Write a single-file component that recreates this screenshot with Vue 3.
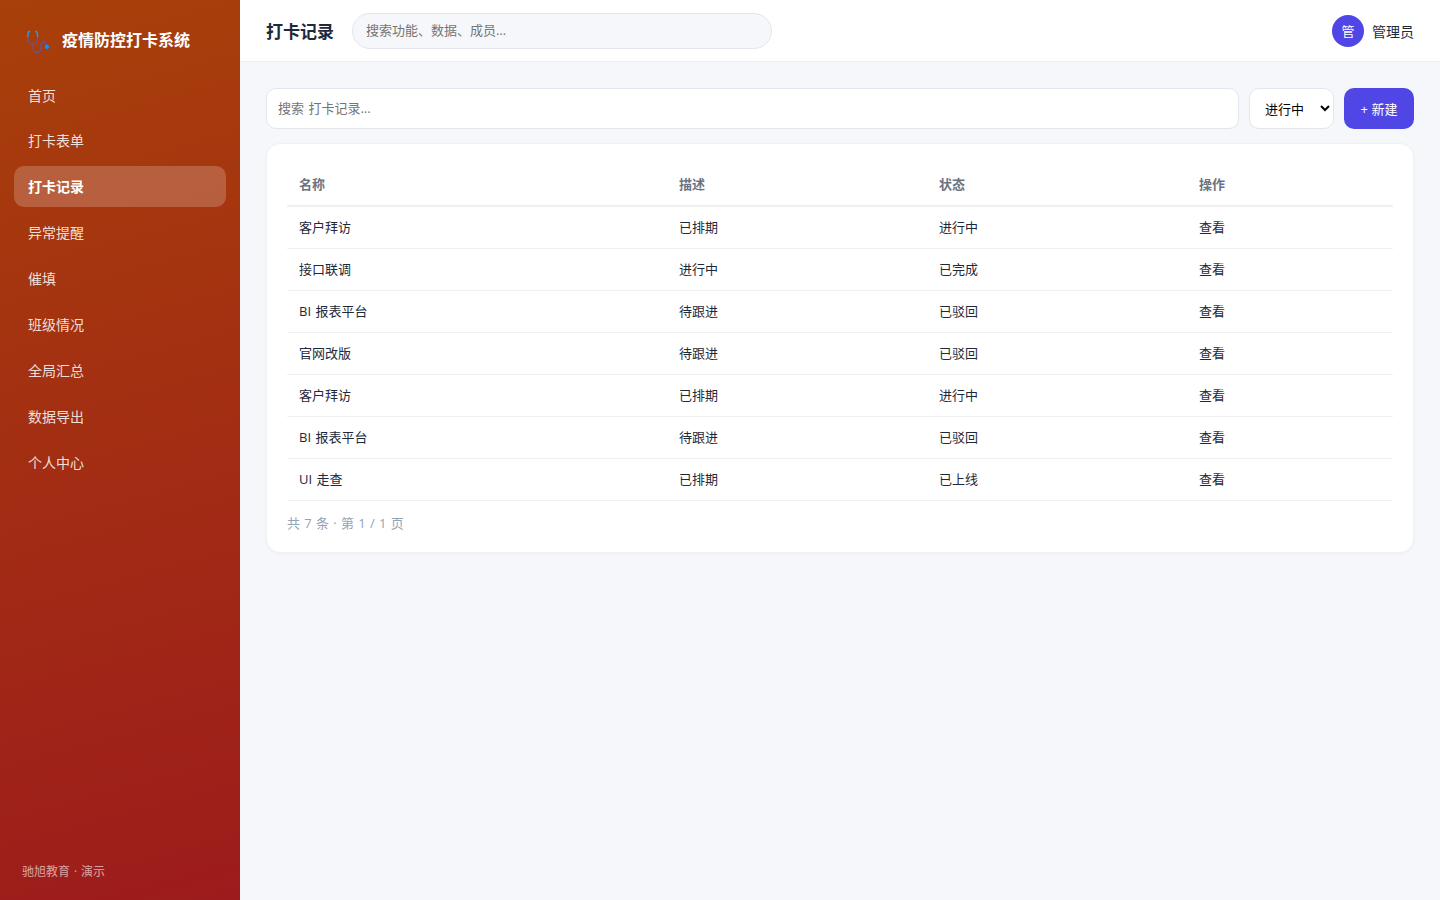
<template>
  <div class="layout">
    <aside class="sidebar">
      <div class="brand">
        <svg class="brand-icon" viewBox="0 0 24 24" fill="none" stroke-width="1.4">
          <path d="M2.8 7.5v2.6c0 2.6 2 4.4 4.6 4.4s4.6-1.8 4.6-4.4V7.5" stroke="#6b5496" />
          <path d="M5 2.4H3.6C2.7 3.6 2.5 5.4 2.7 7.7M9.8 2.4h1.4c.9 1.2 1.1 3 .9 5.3" stroke="#12a5ee" />
          <path d="M7.8 14.5v3.7c0 2.8 1.5 4.2 3.7 4.2s3.8-1.4 3.8-4.2v-3.4c0-1.5.9-2.5 2.5-2.5s2.6 1.1 2.6 2.8v.8" stroke="#6b5496" stroke-width="1.1" />
          <circle cx="21" cy="17" r="2.1" fill="#0f8ff8" />
        </svg>
        <span class="brand-name">疫情防控打卡系统</span>
      </div>
      <nav class="menu">
        <a
          v-for="item in menus"
          :key="item"
          class="menu-item"
          :class="{ active: item === current }"
          @click="current = item"
        >{{ item }}</a>
      </nav>
      <div class="sidebar-footer">驰旭教育 · 演示</div>
    </aside>

    <div class="main">
      <header class="topbar">
        <h1 class="page-title">{{ current }}</h1>
        <input class="global-search" placeholder="搜索功能、数据、成员…" />
        <div class="user">
          <span class="avatar">管</span>
          <span class="user-name">管理员</span>
        </div>
      </header>

      <section class="content">
        <div class="toolbar">
          <input v-model="keyword" class="search" :placeholder="`搜索 ${current}...`" />
          <select v-model="status" class="status">
            <option>进行中</option>
            <option>已完成</option>
            <option>已驳回</option>
          </select>
          <button class="btn-primary">+ 新建</button>
        </div>

        <div class="card">
          <table class="table">
            <colgroup>
              <col class="col-name" />
              <col class="col-mid" />
              <col class="col-mid" />
              <col />
            </colgroup>
            <thead>
              <tr>
                <th>名称</th>
                <th>描述</th>
                <th>状态</th>
                <th>操作</th>
              </tr>
            </thead>
            <tbody>
              <tr v-for="(row, i) in filteredRows" :key="i">
                <td>{{ row.name }}</td>
                <td>{{ row.desc }}</td>
                <td>{{ row.status }}</td>
                <td><a class="link">查看</a></td>
              </tr>
            </tbody>
          </table>
          <div class="pager">共 {{ filteredRows.length }} 条 · 第 1 / 1 页</div>
        </div>
      </section>
    </div>
  </div>
</template>

<script setup>
import { ref, computed } from 'vue';

const menus = ['首页', '打卡表单', '打卡记录', '异常提醒', '催填', '班级情况', '全局汇总', '数据导出', '个人中心'];
const current = ref('打卡记录');
const keyword = ref('');
const status = ref('进行中');

const rows = ref([
  { name: '客户拜访', desc: '已排期', status: '进行中' },
  { name: '接口联调', desc: '进行中', status: '已完成' },
  { name: 'BI 报表平台', desc: '待跟进', status: '已驳回' },
  { name: '官网改版', desc: '待跟进', status: '已驳回' },
  { name: '客户拜访', desc: '已排期', status: '进行中' },
  { name: 'BI 报表平台', desc: '待跟进', status: '已驳回' },
  { name: 'UI 走查', desc: '已排期', status: '已上线' },
]);

const filteredRows = computed(() => rows.value.filter((r) => r.name.includes(keyword.value)));
</script>

<style>
body {
  margin: 0;
  background: #f5f7fb;
}
</style>

<style scoped>
.layout,
.layout * {
  box-sizing: border-box;
}

.layout {
  display: flex;
  height: 100vh;
  overflow: hidden;
  background: #f5f7fb;
  color: #1e293b;
  font-family: 'Open Sans', 'Noto Sans CJK SC', sans-serif;
  font-size: 14px;
}

input,
select,
button {
  font-family: inherit;
  font-size: 13px;
}

/* Sidebar */
.sidebar {
  display: flex;
  flex-direction: column;
  flex: none;
  width: 240px;
  padding: 18px 14px;
  background: linear-gradient(165deg, #a8400a, #9d1b1c);
  color: #fff;
}

.brand {
  display: flex;
  align-items: center;
  gap: 12px;
  height: 42px;
  padding-left: 11px;
}

.brand-icon {
  width: 25px;
  height: 25px;
  margin-top: 4px;
}

.brand-name {
  font-size: 16px;
  font-weight: 700;
}

.menu {
  display: flex;
  flex-direction: column;
  gap: 5px;
  margin-top: 14.5px;
}

.menu-item {
  height: 40.9px;
  padding: 0 14px;
  border-radius: 10px;
  line-height: 41px;
  color: rgba(255, 255, 255, 0.85);
  cursor: pointer;
}

.menu-item.active {
  background: rgba(255, 255, 255, 0.2);
  color: #fff;
  font-weight: 700;
}

.sidebar-footer {
  margin-top: auto;
  padding: 0 8px;
  font-size: 12px;
  line-height: 20px;
  word-spacing: 0.8px;
  color: rgba(255, 255, 255, 0.6);
}

/* Topbar */
.main {
  flex: 1;
  min-width: 0;
}

.topbar {
  display: flex;
  align-items: center;
  gap: 18px;
  height: 62px;
  padding: 0 26px;
  background: #fff;
  border-bottom: 1px solid #edeff4;
}

.page-title {
  margin: 0;
  font-size: 17px;
  font-weight: 700;
}

.global-search {
  width: 420px;
  height: 36px;
  padding: 0 13px 1px;
  border: 1px solid #e3e6ef;
  border-radius: 18px;
  background: #f5f7fb;
  outline: none;
}

.user {
  display: flex;
  align-items: center;
  gap: 8px;
  margin-left: auto;
}

.avatar {
  width: 32px;
  height: 32px;
  border-radius: 50%;
  background: #4f46e5;
  color: #fff;
  font-size: 13px;
  line-height: 32px;
  text-align: center;
}

/* Content */
.content {
  padding: 26px;
}

.toolbar {
  display: flex;
  gap: 10px;
  height: 41px;
  margin-bottom: 14px;
}

.search {
  flex: 1;
  padding: 0 11px 1px;
  border: 1px solid #e3e6ef;
  border-radius: 10px;
  outline: none;
  word-spacing: 1px;
}

.status {
  width: 85px;
  padding: 0 0 0 11px;
  border: 1px solid #e3e6ef;
  border-radius: 10px;
  background: #fff;
  color: #000;
}

.btn-primary {
  width: 70px;
  padding: 0;
  border: none;
  border-radius: 10px;
  background: #4f46e5;
  color: #fff;
}

.card {
  height: 410px;
  padding: 20px;
  border: 1px solid #eff1f6;
  border-radius: 14px;
  background: #fff;
  box-shadow: 0 1px 3px rgba(15, 23, 42, 0.03);
}

.table {
  width: 100%;
  border-collapse: separate;
  border-spacing: 0;
  table-layout: fixed;
  font-size: 13px;
}

.col-name {
  width: 380px;
}

.col-mid {
  width: 260px;
}

.table th,
.table td {
  height: 42px;
  padding: 0 12px 1px;
  border-bottom: 1px solid #eef0f4;
  text-align: left;
  line-height: 20px;
  word-spacing: 1px;
}

.table th {
  height: 43px;
  border-bottom-width: 2px;
  color: #6b7280;
  font-weight: 700;
}

.link {
  cursor: pointer;
}

.pager {
  margin-top: 12px;
  color: #94a3b8;
  font-size: 13px;
  line-height: 20px;
  word-spacing: 0.9px;
}
</style>
